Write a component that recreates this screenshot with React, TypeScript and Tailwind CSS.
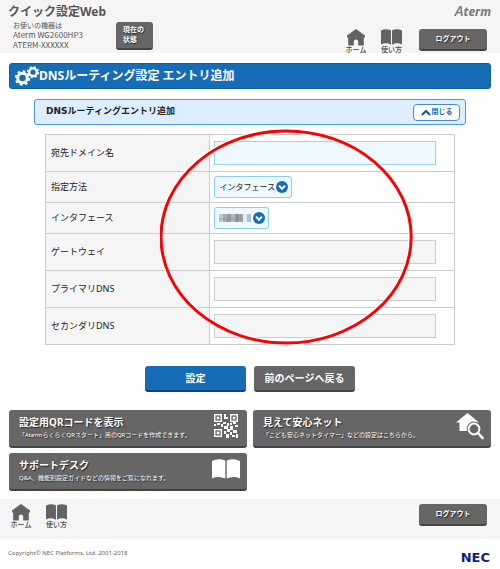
import type { ReactNode } from 'react';

const HomeIcon = () => (
  <svg viewBox="0 0 18 17" className="h-[17px] w-[18px]" fill="#636363" aria-hidden="true">
    <path d="M9 0 18 6.4V8.6H16.8V16.6H11.2V12.8Q11.2 10.6 9 10.6T6.8 12.8V16.6H1.2V8.6H0V6.4Z" />
  </svg>
);

const BookIcon = ({ className, fill }: { className: string; fill: string }) => (
  <svg viewBox="0 0 28 20" preserveAspectRatio="none" className={className} fill={fill} aria-hidden="true">
    <path d="M0 2Q6.5-1.4 13.3 1.6V19.6Q6.5 16.4 0 19.4Z" />
    <path d="M28 2Q21.5-1.4 14.7 1.6V19.6Q21.5 16.4 28 19.4Z" />
  </svg>
);

const GearsIcon = () => (
  <svg viewBox="0 0 24 20" className="h-5 w-6 shrink-0" fill="none" stroke="#fff" aria-hidden="true">
    <circle cx="7.5" cy="12" r="4.8" strokeWidth="3" />
    <circle cx="7.5" cy="12" r="6.6" strokeWidth="2.4" strokeDasharray="2.7 2.48" />
    <circle cx="18" cy="6.2" r="3.8" strokeWidth="2.3" />
    <circle cx="18" cy="6.2" r="5.2" strokeWidth="1.8" strokeDasharray="2.1 1.98" />
  </svg>
);

const QR_MODULES = [
  [10, 0, 2, 5],
  [12, 3, 2, 2],
  [0, 10, 2, 2],
  [3, 9, 3, 2],
  [7, 10, 2, 3],
  [9, 8, 3, 2],
  [13, 9, 2, 3],
  [16, 9, 2, 2],
  [19, 8, 3, 2],
  [21, 11, 3, 2],
  [10, 12, 4, 3],
  [16, 12, 3, 4],
  [13, 15, 3, 3],
  [10, 17, 2, 3],
  [19, 16, 4, 3],
  [16, 18, 2, 3],
  [12, 20, 3, 4],
  [18, 21, 3, 2],
  [22, 20, 2, 4],
];

const QR_FINDERS = [
  [0, 0],
  [16, 0],
  [0, 15],
];

const QrIcon = () => (
  <svg viewBox="0 0 24 24" className="h-6 w-6" fill="#fff" aria-hidden="true">
    {QR_FINDERS.map(([x, y]) => (
      <g key={`${x}-${y}`}>
        <rect x={x + 0.7} y={y + 0.7} width="6.6" height="6.6" fill="none" stroke="#fff" strokeWidth="1.4" />
        <rect x={x + 2.7} y={y + 2.7} width="2.6" height="2.6" />
      </g>
    ))}
    {QR_MODULES.map(([x, y, width, height]) => (
      <rect key={`${x}-${y}`} x={x} y={y} width={width} height={height} />
    ))}
  </svg>
);

const HouseSearchIcon = () => (
  <svg viewBox="0 0 28 28" className="h-7 w-7" aria-hidden="true">
    <path d="M11.5 1 23 10.5H19.5V19H3.5V10.5H0Z" fill="#fff" />
    <circle cx="18" cy="17" r="7.4" fill="#666" />
    <circle cx="18" cy="17" r="5.4" fill="#666" stroke="#fff" strokeWidth="2" />
    <path d="m22.5 21.5 4 4.5" stroke="#fff" strokeWidth="2.6" strokeLinecap="round" />
  </svg>
);

const Chevron = () => (
  <svg
    viewBox="0 0 12 12"
    className="pointer-events-none absolute top-1 right-[3px] h-3 w-3"
    aria-hidden="true"
  >
    <circle cx="6" cy="6" r="6" fill="#176db5" />
    <path d="m3 4.6 3 3.2 3-3.2" fill="none" stroke="#fff" strokeWidth="2" />
  </svg>
);

const NavLinks = () => (
  <nav className="flex gap-[15px] text-[7px] leading-[8px] font-medium text-[#444]">
    <a href="#home" className="flex w-5 flex-col items-center whitespace-nowrap">
      <HomeIcon />
      ホーム
    </a>
    <a href="#help" className="flex w-[21px] flex-col items-center whitespace-nowrap">
      <BookIcon className="h-[17px] w-[21px] pb-px" fill="#636363" />
      使い方
    </a>
  </nav>
);

const LogoutButton = () => (
  <button
    type="button"
    className="h-[22px] w-[68px] rounded-[3px] border-b-2 border-[#444] bg-[#666] text-[7px] font-bold text-white [text-shadow:1px_1px_1px_#222]"
  >
    ログアウト
  </button>
);

interface LinkCardProps {
  title: string;
  text: string;
  icon: ReactNode;
}

const LinkCard = ({ title, text, icon }: LinkCardProps) => (
  <a
    href="#link"
    className="flex h-[38px] items-start justify-between rounded-[3px] border-b-2 border-[#444] bg-[#666] pr-[7px] pl-2.5 text-white [text-shadow:1px_1px_1px_#222]"
  >
    <span className="flex flex-col whitespace-nowrap">
      <span className="pt-[5px] text-[10px] leading-[14px] font-bold">{title}</span>
      <span className="text-[6px] leading-[12px]">{text}</span>
    </span>
    <span className="flex h-8 w-7 items-center justify-center">{icon}</span>
  </a>
);

interface FieldRowProps {
  id: string;
  label: string;
  children: ReactNode;
}

const FieldRow = ({ id, label, children }: FieldRowProps) => (
  <tr>
    <th scope="row" className="w-2/5 border border-[#ccc] bg-[#f5f5f5] px-[5px] text-left font-normal">
      <label htmlFor={id}>{label}</label>
    </th>
    <td className="border border-[#ccc] px-1 py-1">{children}</td>
  </tr>
);

const DISABLED_FIELDS = [
  { id: 'gateway', label: 'ゲートウェイ' },
  { id: 'primary-dns', label: 'プライマリDNS' },
  { id: 'secondary-dns', label: 'セカンダリDNS' },
];

const MOSAIC = ['#c4cacf', '#a9adb1', '#969a9e', '#b4b8bb', '#8f9397', '#a1a5a8', '#e2ecf2', '#a8c4d6'];

const App = () => {
  return (
    <div className="bg-white font-['Noto_Sans','Noto_Sans_CJK_JP',sans-serif] text-[#222]" lang="ja">
      <header className="flex h-[53px] justify-between bg-[#f5f5f5] pr-[9px] pl-2">
        <div className="pt-1 text-[#555]">
          <h1 className="text-[12px] leading-[16px] font-bold">クイック設定Web</h1>
          <div className="flex gap-[33px] pl-[5px]">
            <div className="font-['Noto_Sans_CJK_JP',sans-serif] text-[8px] leading-[10px] whitespace-nowrap">
              <p className="text-[7px]">お使いの機器は</p>
              <p>Aterm WG2600HP3</p>
              <p>ATERM-XXXXXX</p>
            </div>
            <button
              type="button"
              className="mt-0.5 h-7 w-[37px] rounded-[3px] border-b-2 border-[#444] bg-[#666] pl-[7px] text-left text-[7px] leading-[10px] font-bold text-white [text-shadow:1px_1px_1px_#222]"
            >
              現在の
              <br />
              状態
            </button>
          </div>
        </div>
        <div className="flex flex-col items-end">
          <p className="text-[12px] leading-[20px] font-bold text-[#777] italic">
            <span className="text-[15px] font-medium">A</span>term
          </p>
          <div className="flex gap-[17px] pt-[7px] pr-1">
            <NavLinks />
            <LogoutButton />
          </div>
        </div>
      </header>

      <main className="px-[9px] pt-2.5">
        <h2 className="flex h-[26px] items-center rounded-[3px] border border-[#0f5c9f] bg-[#176db5] pl-[5px] text-[12px] font-bold text-white">
          <GearsIcon />
          DNSルーティング設定 エントリ追加
        </h2>

        <div className="mx-[25px] mt-2.5 flex h-[26px] items-center justify-between rounded-[3px] border border-[#4a9bdc] bg-[#dceeff] pr-[5px] pl-[11px]">
          <h3 className="font-['DejaVu_Sans','Noto_Sans_CJK_JP',sans-serif] text-[9px] font-bold">
            DNSルーティングエントリ追加
          </h3>
          <button
            type="button"
            className="flex h-[17px] w-[47px] items-center justify-center gap-px rounded-[4px] border border-[#4a8cc5] bg-white text-[7px] font-bold text-[#176db5]"
          >
            <svg viewBox="0 0 10 7" className="h-[7px] w-[10px]" aria-hidden="true">
              <path d="m1 6 4-4 4 4" fill="none" stroke="#0c5a9c" strokeWidth="2" />
            </svg>
            閉じる
          </button>
        </div>

        <div className="relative mx-9 mt-[9px]">
          <table className="w-full border-collapse text-[9px] leading-[12px]">
            <tbody>
              <FieldRow id="domain" label="宛先ドメイン名">
                <input
                  id="domain"
                  type="text"
                  className="my-0.5 block h-6 w-[94%] border border-[#9dd0f5] bg-[#eef8ff] px-1"
                />
              </FieldRow>
              <FieldRow id="method" label="指定方法">
                <div className="relative h-[22px] w-[78px] rounded-[3px] border border-[#8ccbf5] bg-[#eef8ff]">
                  <select id="method" className="h-full w-full appearance-none pl-[5px] text-[8px]">
                    <option>インタフェース</option>
                  </select>
                  <Chevron />
                </div>
              </FieldRow>
              <FieldRow id="interface" label="インタフェース">
                <div className="relative h-[22px] w-[55px] rounded-[3px] border border-[#8ccbf5] bg-[#eef8ff]">
                  <select id="interface" className="h-full w-full appearance-none" />
                  <svg
                    viewBox="0 0 32 10"
                    className="pointer-events-none absolute top-[5px] left-1 h-[10px] w-8"
                    aria-hidden="true"
                  >
                    {MOSAIC.map((color, i) => (
                      <rect key={color} x={i * 4} y="1" width="4" height="8" fill={color} />
                    ))}
                    <rect y="5" width="24" height="2" fill="#888c90" opacity="0.3" />
                  </svg>
                  <Chevron />
                </div>
              </FieldRow>
              {DISABLED_FIELDS.map((field) => (
                <FieldRow key={field.id} id={field.id} label={field.label}>
                  <input
                    id={field.id}
                    type="text"
                    disabled
                    className="my-0.5 block h-6 w-[94%] border border-[#ccc] bg-[#f5f5f5] px-1"
                  />
                </FieldRow>
              ))}
            </tbody>
          </table>
          <svg
            viewBox="0 0 254 217"
            preserveAspectRatio="none"
            className="pointer-events-none absolute -top-[6px] left-[28%] h-[217px] w-[62%]"
            fill="none"
            aria-hidden="true"
          >
            <ellipse cx="126" cy="109" rx="125" ry="106" stroke="#fff" strokeWidth="5" />
            <ellipse cx="126" cy="109" rx="125" ry="106" stroke="#f00" strokeWidth="3" />
          </svg>
        </div>

        <div className="mt-[21px] flex justify-center gap-2 text-[10px] font-bold text-white [text-shadow:1px_1px_1px_#222]">
          <button type="button" className="h-[26px] w-[101px] rounded-[3px] border-b-2 border-[#0c3f8c] bg-[#176db5]">
            設定
          </button>
          <button type="button" className="h-[26px] w-[101px] rounded-[3px] border-b-2 border-[#444] bg-[#666]">
            前のページへ戻る
          </button>
        </div>

        <div className="mt-[18px] grid grid-cols-2 gap-x-1.5 gap-y-[5px]">
          <LinkCard
            title="設定用QRコードを表示"
            text="「AtermらくらくQRスタート」用のQRコードを作成できます。"
            icon={<QrIcon />}
          />
          <LinkCard
            title="見えて安心ネット"
            text="「こども安心ネットタイマー」などの設定はこちらから。"
            icon={<HouseSearchIcon />}
          />
          <LinkCard
            title="サポートデスク"
            text="Q&A、機能別設定ガイドなどの情報をご覧になれます。"
            icon={<BookIcon className="h-5 w-7" fill="#fff" />}
          />
        </div>
      </main>

      <footer className="mt-2">
        <div className="flex h-10 justify-between bg-[#f5f5f5] pt-[5px] pr-[13px] pl-[11px]">
          <NavLinks />
          <LogoutButton />
        </div>
        <div className="flex items-start justify-between pt-[9px] pr-2.5 pl-2">
          <small className="text-[6px] leading-[10px] text-[#666]">
            Copyright© NEC Platforms, Ltd. 2001-2018
          </small>
          <strong className="pt-[3px] font-['DejaVu_Sans',sans-serif] text-[13px] leading-[14px] text-[#0b1f83]">
            NEC
          </strong>
        </div>
      </footer>
    </div>
  );
};

export default App;
